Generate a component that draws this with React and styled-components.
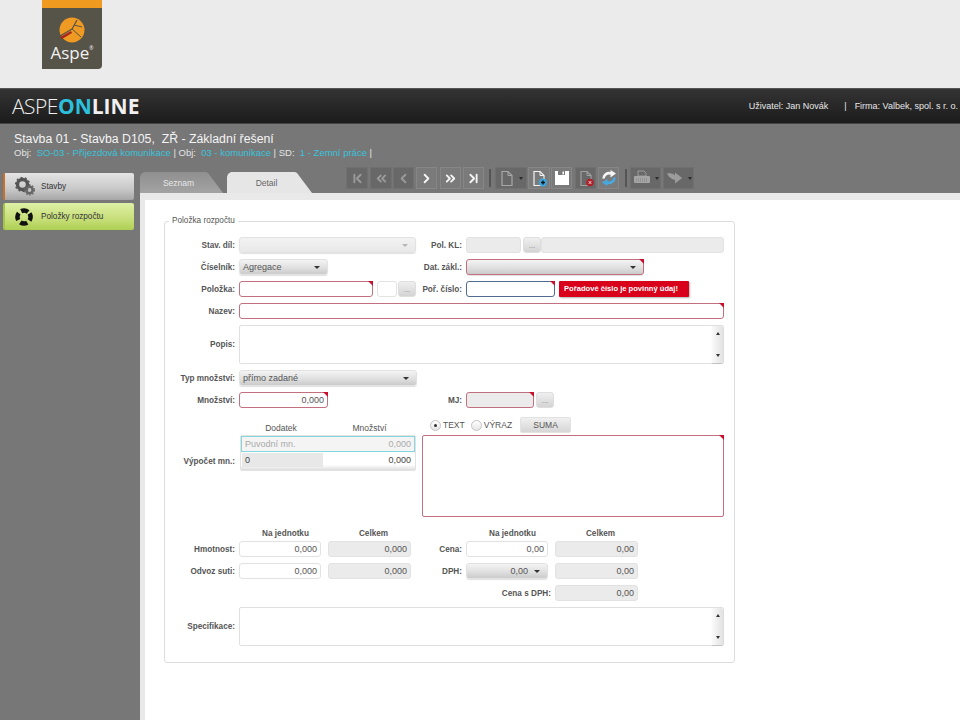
import styled, { createGlobalStyle, css } from 'styled-components';
import {
  ChevronFirst,
  ChevronLast,
  ChevronLeft,
  ChevronRight,
  ChevronsLeft,
  ChevronsRight,
} from 'lucide-react';

const GlobalStyle = createGlobalStyle`
  html, body {
    margin: 0;
    padding: 0;
    background: #fff;
  }
  body {
    font-family: "Liberation Sans", Arial, sans-serif;
    font-size: 9px;
    color: #444;
    overflow: hidden;
  }
  * { box-sizing: border-box; }
`;

const Page = styled.div`
  width: 960px;
  height: 720px;
  display: flex;
  flex-direction: column;
  overflow: hidden;
`;

const TopBand = styled.div`
  height: 88px;
  flex: none;
  background: #ebebeb;
  padding-left: 42px;
`;

const LogoBox = styled.div`
  width: 60px;
  height: 69px;
  background: #565349;
  border-top: 8px solid #f09a20;
  border-bottom-right-radius: 4px;
  display: flex;
  flex-direction: column;
  align-items: center;
  padding-top: 9px;
`;

const LogoText = styled.div`
  font-family: "Open Sans", sans-serif;
  font-size: 17px;
  line-height: 18px;
  margin-top: 1px;
  color: #f2f2f2;
  sup {
    font-size: 5px;
    vertical-align: 9px;
    line-height: 0;
  }
`;

const Header = styled.header`
  height: 36px;
  flex: none;
  display: flex;
  align-items: center;
  justify-content: space-between;
  padding: 0 2px 0 12px;
  background: linear-gradient(#343434, #1b1b1b);
  border-top: 1px solid #555;
  border-bottom: 1px solid #444;
`;

const Brand = styled.div`
  font-family: "Open Sans", sans-serif;
  font-size: 21px;
  line-height: 24px;
  font-weight: 300;
  letter-spacing: -0.5px;
  color: #f0f0f0;
  b {
    font-weight: 700;
    letter-spacing: 0;
  }
  i {
    font-style: normal;
    font-weight: 700;
    letter-spacing: 0;
    color: #2cc0dc;
  }
`;

const UserInfo = styled.div`
  display: flex;
  color: #e8e8e8;
  font-size: 9px;
`;

const UserDivider = styled.span`
  margin: 0 8px 0 16px;
`;

const Shell = styled.div`
  flex: 1;
  display: flex;
  flex-direction: column;
  min-height: 0;
  background: #777;
`;

const ProjectInfo = styled.div`
  height: 43px;
  flex: none;
  padding: 8px 0 0 14px;
`;

const ProjectTitle = styled.div`
  font-size: 12.3px;
  line-height: 15px;
  color: #f4f4f4;
  white-space: pre;
`;

const ProjectPath = styled.div`
  font-size: 9.5px;
  line-height: 12px;
  color: #e4e4e4;
  white-space: pre;
  em {
    font-style: normal;
    color: #38c4dc;
  }
`;

const Body = styled.div`
  flex: 1;
  display: flex;
  min-height: 0;
`;

const Sidebar = styled.nav`
  width: 140px;
  flex: none;
  padding: 6px 6px 0 3px;
  display: flex;
  flex-direction: column;
  gap: 3px;
`;

const NavItem = styled.div`
  height: 27px;
  display: flex;
  align-items: center;
  gap: 6px;
  padding-left: 10px;
  border-radius: 2px;
  color: #333;
  font-size: 8.2px;
  border-left: 2px solid ${(p) => (p.$active ? '#a4c54a' : '#c8702a')};
  background: ${(p) =>
    p.$active
      ? 'linear-gradient(#dff0a6, #c6de78 60%, #aecf52)'
      : 'linear-gradient(#e4e4e4, #c8c8c8 60%, #a6a6a6)'};
`;

const NavIcon = styled.span`
  width: 20px;
  height: 20px;
  flex: none;
  display: flex;
  align-items: center;
`;

const Content = styled.main`
  flex: 1;
  display: flex;
  flex-direction: column;
  min-width: 0;
`;

const TabBar = styled.div`
  height: 26px;
  flex: none;
  display: flex;
  align-items: flex-start;
`;

const Tabs = styled.div`
  align-self: flex-end;
  display: flex;
  gap: 4px;
`;

const Tab = styled.div`
  width: ${(p) => (p.$active ? '85px' : '83px')};
  height: 21px;
  display: flex;
  align-items: center;
  justify-content: center;
  padding-right: 6px;
  font-size: 8.5px;
  color: ${(p) => (p.$active ? '#666' : '#e8e8e8')};
  background: ${(p) => (p.$active ? '#e6e6e6' : 'linear-gradient(#8f8f8f, #a3a3a3)')};
  clip-path: polygon(
    0 100%,
    0 5px,
    1px 2px,
    4px 0,
    calc(100% - 17px) 0,
    calc(100% - 15px) 1px,
    100% 100%
  );
`;

const Toolbar = styled.div`
  margin-left: 34px;
  display: flex;
`;

const ToolButton = styled.div`
  width: ${(p) => p.$w || 21}px;
  height: 22px;
  flex: none;
  display: flex;
  align-items: center;
  justify-content: center;
  gap: 4px;
  margin-left: ${(p) => p.$ml || 0}px;
  border: 1px solid ${(p) => (p.$on ? '#868686' : '#707070')};
  background: ${(p) => (p.$on ? '#7a7a7a' : '#686868')};
  color: ${(p) => (p.$on ? '#f4f4f4' : '#9a9a9a')};
`;

const ToolSep = styled.div`
  width: 2px;
  height: 18px;
  margin: 2px 0 0 ${(p) => p.$ml}px;
  background: #555;
`;

const SmallCaret = styled.span`
  width: 0;
  height: 0;
  border-left: 2px solid transparent;
  border-right: 2px solid transparent;
  border-top: 3px solid #2d2d2d;
`;

const Panel = styled.div`
  flex: 1;
  min-height: 0;
  background: #e9e9e9;
  padding: 7px 0 0 5px;
`;

const Sheet = styled.div`
  height: 100%;
  background: #fff;
  padding: 15px 0 0 19px;
`;

const Card = styled.fieldset`
  width: 571px;
  margin: 0;
  padding: 10px 0 16px 0;
  border: 1px solid #dcdcdc;
  border-radius: 3px;
  min-inline-size: 0;
`;

const CardTitle = styled.legend`
  margin-left: 4px;
  padding: 0 3px;
  font-size: 8.2px;
  line-height: 12px;
  color: #555;
`;

const FormBody = styled.div`
  display: flex;
  flex-direction: column;
  gap: 6px;
`;

const Row = styled.div`
  display: flex;
  align-items: center;
  gap: 4px;
  height: ${(p) => p.$h || 16}px;
`;

const Label = styled.label`
  width: ${(p) => p.$w || 70}px;
  flex: none;
  text-align: right;
  font-size: 8.2px;
  font-weight: 700;
  color: #555;
  white-space: nowrap;
`;

const invalid = css`
  border-color: #c2707f;
  &::after {
    content: '';
    position: absolute;
    top: -1px;
    right: -1px;
    border-top: 5px solid #c8102e;
    border-left: 5px solid transparent;
  }
`;

const fieldBase = css`
  position: relative;
  height: 16px;
  flex: none;
  width: ${(p) => p.$w}px;
  margin-left: ${(p) => p.$ml || 0}px;
  border: 1px solid #e2e2e2;
  border-radius: 3px;
  font-size: 9px;
  color: #555;
  padding: 0 3px;
  display: flex;
  align-items: center;
  justify-content: ${(p) => (p.$right ? 'flex-end' : 'flex-start')};
  ${(p) => p.$invalid && invalid}
`;

const Input = styled.div`
  ${fieldBase}
  background: ${(p) => (p.$off ? '#ebebeb' : '#fff')};
  ${(p) => p.$focus && 'border-color: #4f6c90;'}
`;

const Select = styled.div`
  ${fieldBase}
  justify-content: space-between;
  padding: 0 7px 0 3px;
  background: linear-gradient(#f4f4f4, #dedede 60%, #cbcbcb);
  box-shadow: 0 1px 1px rgba(0, 0, 0, 0.12);
  ${(p) => p.$off && 'background: linear-gradient(#f2f2f2, #e8e8e8);'}
  ${(p) => p.$center && 'justify-content: flex-end; gap: 6px;'}
`;

const Caret = styled.span`
  width: 0;
  height: 0;
  border-left: 3px solid transparent;
  border-right: 3px solid transparent;
  border-top: 3px solid ${(p) => (p.$off ? '#b5b5b5' : '#333')};
`;

const BrowseButton = styled.div`
  width: 18px;
  height: 16px;
  flex: none;
  margin-left: ${(p) => p.$ml || 0}px;
  border: 1px solid #dedede;
  border-radius: 3px;
  background: linear-gradient(#efefef, #d4d4d4);
  color: #888;
  font-size: 8px;
  line-height: 16px;
  text-align: center;
`;

const ErrorBadge = styled.div`
  width: 130px;
  height: 16px;
  flex: none;
  border-radius: 1px;
  background: #d9001b;
  color: #fff;
  font-size: 7.6px;
  font-weight: 700;
  line-height: 16px;
  padding-left: 5px;
  white-space: nowrap;
  box-shadow: 1px 1px 2px rgba(0, 0, 0, 0.3);
`;

const TextArea = styled.div`
  position: relative;
  width: ${(p) => p.$w}px;
  height: ${(p) => p.$h}px;
  flex: none;
  border: 1px solid #e0e0e0;
  border-radius: 2px;
  display: flex;
  justify-content: flex-end;
  background: #fff;
  ${(p) => p.$invalid && invalid}
`;

const ScrollBar = styled.div`
  width: 11px;
  display: flex;
  flex-direction: column;
  justify-content: space-between;
  align-items: center;
  padding: 6px 0;
  border-radius: 0 2px 2px 0;
  background: linear-gradient(90deg, #fafafa, #e2e2e2);
  box-shadow: 0 1px 1px rgba(0, 0, 0, 0.15);
`;

const ArrowUp = styled.span`
  border-left: 2px solid transparent;
  border-right: 2px solid transparent;
  border-bottom: 3px solid #333;
`;

const ArrowDown = styled.span`
  border-left: 2px solid transparent;
  border-right: 2px solid transparent;
  border-top: 3px solid #333;
`;

const CalcBlock = styled.div`
  margin-top: 3px;
  display: flex;
  gap: 4px;
`;

const CalcLabel = styled(Label)`
  padding-top: 39px;
  line-height: 12px;
`;

const CalcLeft = styled.div`
  width: 177px;
  flex: none;
  padding-top: 5px;
`;

const CalcHead = styled.div`
  display: grid;
  grid-template-columns: 84px 93px;
  height: 13px;
  font-size: 8.5px;
  line-height: 13px;
  text-align: center;
  color: #555;
`;

const CalcTable = styled.div`
  height: 36px;
  margin-left: 1px;
  border: 1px solid #e2e2e2;
  border-radius: 2px;
  padding-bottom: 2px;
  background: linear-gradient(#fff 85%, #ddd);
`;

const CalcRow = styled.div`
  display: grid;
  grid-template-columns: 82fr 92fr;
  height: 16px;
  font-size: 9px;
  line-height: 14px;
  border: 1px solid ${(p) => (p.$selected ? '#86d6de' : 'transparent')};
  color: ${(p) => (p.$selected ? '#aaa' : '#444')};
  background: ${(p) => (p.$selected ? '#f4f4f4' : 'transparent')};
`;

const CalcCell = styled.div`
  padding: 0 3px;
  text-align: ${(p) => (p.$right ? 'right' : 'left')};
  background: ${(p) => (p.$dark ? '#e8e8e8' : 'transparent')};
`;

const CalcRight = styled.div`
  width: 302px;
  flex: none;
  margin-left: 2px;
  display: flex;
  flex-direction: column;
  gap: 2px;
`;

const ModeRow = styled.div`
  height: 16px;
  display: flex;
  align-items: center;
  padding-left: 8px;
  font-size: 8.5px;
  color: #555;
`;

const Radio = styled.span`
  width: 11px;
  height: 11px;
  flex: none;
  margin-right: 2px;
  border: 1px solid #c4c4c4;
  border-radius: 50%;
  display: flex;
  align-items: center;
  justify-content: center;
  background: linear-gradient(#fff, #e6e6e6);
  &::before {
    content: '';
    width: 3px;
    height: 3px;
    border-radius: 50%;
    background: ${(p) => (p.$checked ? '#333' : 'transparent')};
  }
`;

const ModeName = styled.span`
  margin-right: ${(p) => p.$mr}px;
`;

const SumButton = styled.div`
  width: 51px;
  height: 16px;
  border: 1px solid #e2e2e2;
  border-radius: 2px;
  background: linear-gradient(#f0f0f0, #d6d6d6);
  text-align: center;
  line-height: 14px;
  font-size: 8.5px;
  color: #555;
`;

const summaryColumns = css`
  display: grid;
  grid-template-columns: 70px 85px 83px 47px 85px 83px;
  column-gap: 4px;
`;

const SummaryHead = styled.div`
  ${summaryColumns}
  margin-top: 5px;
  height: 12px;
  line-height: 12px;
  font-size: 8.2px;
  font-weight: 700;
  color: #555;
`;

const HeadCell = styled.div`
  grid-column: ${(p) => p.$col};
  padding-left: 8px;
  text-align: center;
`;

const SummaryGrid = styled.div`
  ${summaryColumns}
  margin-top: -5px;
  grid-auto-rows: 16px;
  row-gap: 6px;
  align-items: center;
`;

const WideLabel = styled(Label)`
  width: auto;
  grid-column: 4 / 6;
`;

const DocIcon = ({ color = '#a8a8a8', children }) => (
  <svg width="16" height="17" viewBox="0 0 16 17">
    <path d="M3 1.5h6l4 4v10H3z" fill="none" stroke={color} strokeWidth="1.2" />
    <path d="M9 1.5v4h4" fill="none" stroke={color} strokeWidth="1" />
    {children}
  </svg>
);

const Gears = () => (
  <svg width="20" height="20" viewBox="0 0 20 20">
    <circle cx="7.5" cy="7.5" r="5" fill="none" stroke="#555" strokeWidth="3.4" />
    <circle cx="7.5" cy="7.5" r="7" fill="none" stroke="#555" strokeWidth="1.4" strokeDasharray="2 2.4" />
    <circle cx="14.5" cy="13" r="3.2" fill="none" stroke="#666" strokeWidth="2.6" />
    <circle cx="14.5" cy="13" r="5" fill="none" stroke="#666" strokeWidth="1.2" strokeDasharray="1.6 1.6" />
  </svg>
);

const LifeRing = () => (
  <svg width="18" height="18" viewBox="0 0 18 18">
    <circle
      cx="9"
      cy="9"
      r="6.5"
      fill="none"
      stroke="#111"
      strokeWidth="4.5"
      strokeDasharray="7 3.2"
      transform="rotate(-32 9 9)"
    />
  </svg>
);

const LogoMark = () => (
  <svg width="26" height="26" viewBox="0 0 26 26">
    <circle cx="13" cy="13" r="12.5" fill="#ef9a22" />
    <path d="M1 19 13 12l5-9" fill="none" stroke="#565349" strokeWidth="1.2" />
    <path d="M13 12l9 8M15 8l8 2" fill="none" stroke="#565349" strokeWidth="1" />
    <path d="M1 20l11-6 1 2-10 6z" fill="#a8281e" />
  </svg>
);

const Refresh = () => (
  <svg width="18" height="18" viewBox="0 0 18 18">
    <path d="M3.500 9.500A5.500 5.500 0 0 1 11 4.500" fill="none" stroke="#f6f6f6" strokeWidth="2.6" />
    <path d="M10.500 1 16 4.500 10.500 8.500z" fill="#f6f6f6" />
    <path d="M14.500 8.500A5.500 5.500 0 0 1 7 13.500" fill="none" stroke="#48a8e0" strokeWidth="2.6" />
    <path d="M7.500 10 2 13.500 7.500 17z" fill="#48a8e0" />
  </svg>
);

const Floppy = () => (
  <svg width="16" height="16" viewBox="0 0 16 16">
    <path d="M1 1h14v14H1z" fill="#fff" />
    <path d="M4 1h7v4H4z" fill="#7a7a7a" />
    <path d="M8.500 1.500H10v3H8.500z" fill="#fff" />
  </svg>
);

const Printer = () => (
  <svg width="18" height="16" viewBox="0 0 18 16">
    <path d="M5 6V1h6l2 2v3z" fill="none" stroke="#9a9a9a" />
    <rect x="1" y="6" width="16" height="7" rx="1" fill="#a5a5a5" />
    <path d="M3 9h12M3 11h12" stroke="#7a7a7a" strokeWidth=".8" strokeDasharray="1 1" />
  </svg>
);

const SendArrow = () => (
  <svg width="18" height="14" viewBox="0 0 20 14">
    <path d="M1 2c4-1 7 0 9 2V1l8 6-8 6V9C7 9 4 7 1 2z" fill="#9c9c9c" />
  </svg>
);

const Toolset = () => (
  <Toolbar>
    <ToolButton $w={22}><ChevronFirst size={15} strokeWidth={3} /></ToolButton>
    <ToolButton $w={22} $ml={2}><ChevronsLeft size={15} strokeWidth={3} /></ToolButton>
    <ToolButton $ml={1}><ChevronLeft size={15} strokeWidth={3} /></ToolButton>
    <ToolButton $ml={2} $on><ChevronRight size={15} strokeWidth={3} /></ToolButton>
    <ToolButton $ml={3} $on><ChevronsRight size={15} strokeWidth={3} /></ToolButton>
    <ToolButton $ml={2} $on><ChevronLast size={15} strokeWidth={3} /></ToolButton>
    <ToolSep $ml={5} />
    <ToolButton $w={32} $ml={4}><DocIcon /><SmallCaret /></ToolButton>
    <ToolButton $w={22} $ml={1} $on>
      <DocIcon color="#f2f2f2">
        <circle cx="12" cy="12.5" r="4" fill="#3fa4dc" />
        <path d="M12 10.500v4M10 12.500h4" stroke="#111" strokeWidth="1.3" />
      </DocIcon>
    </ToolButton>
    <ToolButton $ml={1} $on><Floppy /></ToolButton>
    <ToolButton $ml={3}>
      <DocIcon color="#a0a0a0">
        <circle cx="12" cy="12.5" r="3.8" fill="#b0202a" />
        <path d="M10.600 11l2.800 3M13.400 11l-2.800 3" stroke="#eee" strokeWidth=".8" />
      </DocIcon>
    </ToolButton>
    <ToolButton $ml={2} $on><Refresh /></ToolButton>
    <ToolSep $ml={6} />
    <ToolButton $w={31} $ml={3}><Printer /><SmallCaret /></ToolButton>
    <ToolButton $w={31} $ml={2}><SendArrow /><SmallCaret /></ToolButton>
  </Toolbar>
);

const ScrollArea = ({ w, h }) => (
  <TextArea $w={w} $h={h}>
    <ScrollBar>
      <ArrowUp />
      <ArrowDown />
    </ScrollBar>
  </TextArea>
);

export default function App() {
  return (
    <Page>
      <GlobalStyle />
      <TopBand>
        <LogoBox>
          <LogoMark />
          <LogoText>Aspe<sup>®</sup></LogoText>
        </LogoBox>
      </TopBand>

      <Header>
        <Brand>ASPE<i>ON</i><b>LINE</b></Brand>
        <UserInfo>
          <span>Uživatel: Jan Novák</span>
          <UserDivider>|</UserDivider>
          <span>Firma: Valbek, spol. s r. o.</span>
        </UserInfo>
      </Header>

      <Shell>
        <ProjectInfo>
          <ProjectTitle>Stavba 01 - Stavba D105,  ZŘ - Základní řešení</ProjectTitle>
          <ProjectPath>
            Obj:  <em>SO-03 - Příjezdová komunikace</em> | Obj:  <em>03 - komunikace</em> | SD:  <em>1 - Zemní práce</em> |
          </ProjectPath>
        </ProjectInfo>

        <Body>
          <Sidebar>
            <NavItem><NavIcon><Gears /></NavIcon>Stavby</NavItem>
            <NavItem $active><NavIcon><LifeRing /></NavIcon>Položky rozpočtu</NavItem>
          </Sidebar>

          <Content>
            <TabBar>
              <Tabs>
                <Tab>Seznam</Tab>
                <Tab $active>Detail</Tab>
              </Tabs>
              <Toolset />
            </TabBar>

            <Panel>
              <Sheet>
                <Card>
                  <CardTitle>Položka rozpočtu</CardTitle>
                  <FormBody>
                    <Row>
                      <Label>Stav. díl:</Label>
                      <Select $w={177} $off><span /><Caret $off /></Select>
                      <Label $w={42}>Pol. KL:</Label>
                      <Input $w={55} $off />
                      <BrowseButton $ml={-2}>...</BrowseButton>
                      <Input $w={183} $off $ml={-4} />
                    </Row>
                    <Row>
                      <Label>Číselník:</Label>
                      <Select $w={89}>Agregace<Caret /></Select>
                      <Label $w={130}>Dat. zákl.:</Label>
                      <Select $w={178} $invalid><span /><Caret /></Select>
                    </Row>
                    <Row>
                      <Label>Položka:</Label>
                      <Input $w={134} $invalid />
                      <Input $w={20} />
                      <BrowseButton $ml={-3}>...</BrowseButton>
                      <Label $w={42}>Poř. číslo:</Label>
                      <Input $w={89} $invalid $focus />
                      <ErrorBadge>Pořadové číslo je povinný údaj!</ErrorBadge>
                    </Row>
                    <Row>
                      <Label>Nazev:</Label>
                      <Input $w={485} $invalid />
                    </Row>
                    <Row $h={39}>
                      <Label>Popis:</Label>
                      <ScrollArea w={485} h={39} />
                    </Row>
                    <Row>
                      <Label>Typ množství:</Label>
                      <Select $w={178}>přímo zadané<Caret /></Select>
                    </Row>
                    <Row>
                      <Label>Množství:</Label>
                      <Input $w={89} $right $invalid>0,000</Input>
                      <Label $w={130}>MJ:</Label>
                      <Input $w={68} $off $invalid />
                      <BrowseButton $ml={-2}>...</BrowseButton>
                    </Row>

                    <CalcBlock>
                      <CalcLabel>Výpočet mn.:</CalcLabel>
                      <CalcLeft>
                        <CalcHead>
                          <span>Dodatek</span>
                          <span>Množství</span>
                        </CalcHead>
                        <CalcTable>
                          <CalcRow $selected>
                            <CalcCell>Puvodní mn.</CalcCell>
                            <CalcCell $right>0,000</CalcCell>
                          </CalcRow>
                          <CalcRow>
                            <CalcCell $dark>0</CalcCell>
                            <CalcCell $right>0,000</CalcCell>
                          </CalcRow>
                        </CalcTable>
                      </CalcLeft>
                      <CalcRight>
                        <ModeRow>
                          <Radio $checked />
                          <ModeName $mr={6}>TEXT</ModeName>
                          <Radio />
                          <ModeName $mr={8}>VÝRAZ</ModeName>
                          <SumButton>SUMA</SumButton>
                        </ModeRow>
                        <TextArea $w={302} $h={82} $invalid />
                      </CalcRight>
                    </CalcBlock>

                    <SummaryHead>
                      <HeadCell $col={2}>Na jednotku</HeadCell>
                      <HeadCell $col={3}>Celkem</HeadCell>
                      <HeadCell $col={5}>Na jednotku</HeadCell>
                      <HeadCell $col={6}>Celkem</HeadCell>
                    </SummaryHead>
                    <SummaryGrid>
                      <Label>Hmotnost:</Label>
                      <Input $w={82} $right>0,000</Input>
                      <Input $w={83} $right $off>0,000</Input>
                      <Label $w={47}>Cena:</Label>
                      <Input $w={82} $right>0,00</Input>
                      <Input $w={83} $right $off>0,00</Input>

                      <Label>Odvoz suti:</Label>
                      <Input $w={82} $right>0,000</Input>
                      <Input $w={83} $right $off>0,000</Input>
                      <Label $w={47}>DPH:</Label>
                      <Select $w={82} $center>0,00<Caret /></Select>
                      <Input $w={83} $right $off>0,00</Input>

                      <WideLabel>Cena s DPH:</WideLabel>
                      <Input $w={83} $right $off>0,00</Input>
                    </SummaryGrid>

                    <Row $h={39}>
                      <Label>Specifikace:</Label>
                      <ScrollArea w={485} h={39} />
                    </Row>
                  </FormBody>
                </Card>
              </Sheet>
            </Panel>
          </Content>
        </Body>
      </Shell>
    </Page>
  );
}
